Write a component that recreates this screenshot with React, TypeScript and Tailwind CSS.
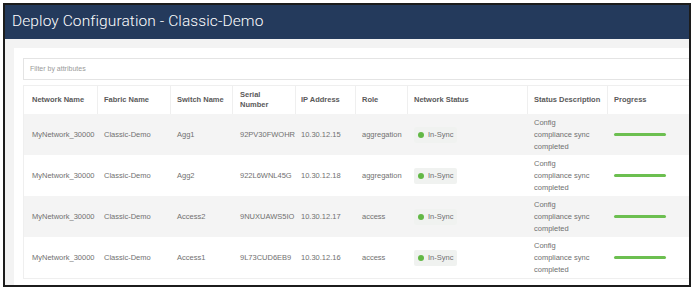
import React from 'react';

const rows = [
  { net: 'MyNetwork_30000', fabric: 'Classic-Demo', sw: 'Agg1', serial: '92PV30FWOHR', ip: '10.30.12.15', role: 'aggregation' },
  { net: 'MyNetwork_30000', fabric: 'Classic-Demo', sw: 'Agg2', serial: '922L6WNL45G', ip: '10.30.12.18', role: 'aggregation' },
  { net: 'MyNetwork_30000', fabric: 'Classic-Demo', sw: 'Access2', serial: '9NUXUAWS5IO', ip: '10.30.12.17', role: 'access' },
  { net: 'MyNetwork_30000', fabric: 'Classic-Demo', sw: 'Access1', serial: '9L73CUD6EB9', ip: '10.30.12.16', role: 'access' },
];

const cols = ['w-[74px] pl-[8px]', 'w-[73px] pl-[6px]', 'w-[62px] pl-[6px]', 'w-[63px] pl-[7px]', 'w-[60px] pl-[5px]', 'w-[52px] pl-[6px]', 'w-[120px] pl-[6px]', 'w-[80px] pl-[6px]', 'w-[100px] pl-[6px]'];

function HeadCell({ i, children }: { i: number; children: React.ReactNode }) {
  return (
    <div className={`${cols[i]} shrink-0 flex items-center border-r border-[#efefef] leading-[10px]`}>
      {children}
    </div>
  );
}

function Cell({ i, children }: { i: number; children: React.ReactNode }) {
  return <div className={`${cols[i]} shrink-0 flex items-center`}>{children}</div>;
}

export default function App() {
  return (
    <div className="w-[695px] h-[291px] bg-white pt-[3px] pl-[3px] font-['Liberation_Sans',Arial,sans-serif]">
      <div className="w-[688px] h-[284px] border-2 border-[#1c1c1c] overflow-hidden flex flex-col bg-[#f3f3f3]">
        <div className="h-[34px] shrink-0 bg-[#243a5c] flex items-center pl-[7px]">
          <span className="text-white text-[15.5px] font-light tracking-[0.1px] font-['Roboto',sans-serif]">
            Deploy Configuration - Classic-Demo
          </span>
        </div>
        <div className="flex-1 pl-[9px] pt-[9px] overflow-hidden">
          <div className="bg-white h-full pl-[9px] pt-[10px] overflow-hidden">
            <div className="w-[700px] h-[22px] border border-[#e4e4e4] flex items-center pl-[6px] text-[7px] text-[#9a9a9a]">
              Filter by attributes
            </div>
            <div className="w-[700px] mt-[5px] border border-[#efefef] text-[7.5px]">
              <div className="h-[28px] flex text-[#5a5a5a] font-semibold bg-white">
                <HeadCell i={0}>Network Name</HeadCell>
                <HeadCell i={1}>Fabric Name</HeadCell>
                <HeadCell i={2}>Switch Name</HeadCell>
                <HeadCell i={3}>
                  Serial
                  <br />
                  Number
                </HeadCell>
                <HeadCell i={4}>IP Address</HeadCell>
                <HeadCell i={5}>Role</HeadCell>
                <HeadCell i={6}>Network Status</HeadCell>
                <HeadCell i={7}>Status Description</HeadCell>
                <HeadCell i={8}>Progress</HeadCell>
              </div>
              {rows.map((r, idx) => (
                <div key={idx} className={`h-[41px] flex text-[#707070] ${idx % 2 === 0 ? 'bg-[#f4f4f4]' : 'bg-white'}`}>
                  <Cell i={0}>{r.net}</Cell>
                  <Cell i={1}>{r.fabric}</Cell>
                  <Cell i={2}>{r.sw}</Cell>
                  <Cell i={3}>{r.serial}</Cell>
                  <Cell i={4}>{r.ip}</Cell>
                  <Cell i={5}>{r.role}</Cell>
                  <div className="w-[120px] pl-[6px] shrink-0 flex items-center">
                    <span className="flex items-center gap-[4px] bg-[#f0f2f0] rounded-[2px] px-[4px] h-[16px]">
                      <span className="w-[6px] h-[6px] rounded-full bg-[#62b846]" />
                      In-Sync
                    </span>
                  </div>
                  <div className="w-[80px] pl-[6px] shrink-0 flex items-center leading-[12px]">
                    <span>
                      Config
                      <br />
                      compliance sync
                      <br />
                      completed
                    </span>
                  </div>
                  <div className="w-[100px] pl-[6px] shrink-0 flex items-center">
                    <div className="w-[52px] h-[3px] bg-[#6cbf50] rounded-full" />
                  </div>
                </div>
              ))}
            </div>
          </div>
        </div>
      </div>
    </div>
  );
}
